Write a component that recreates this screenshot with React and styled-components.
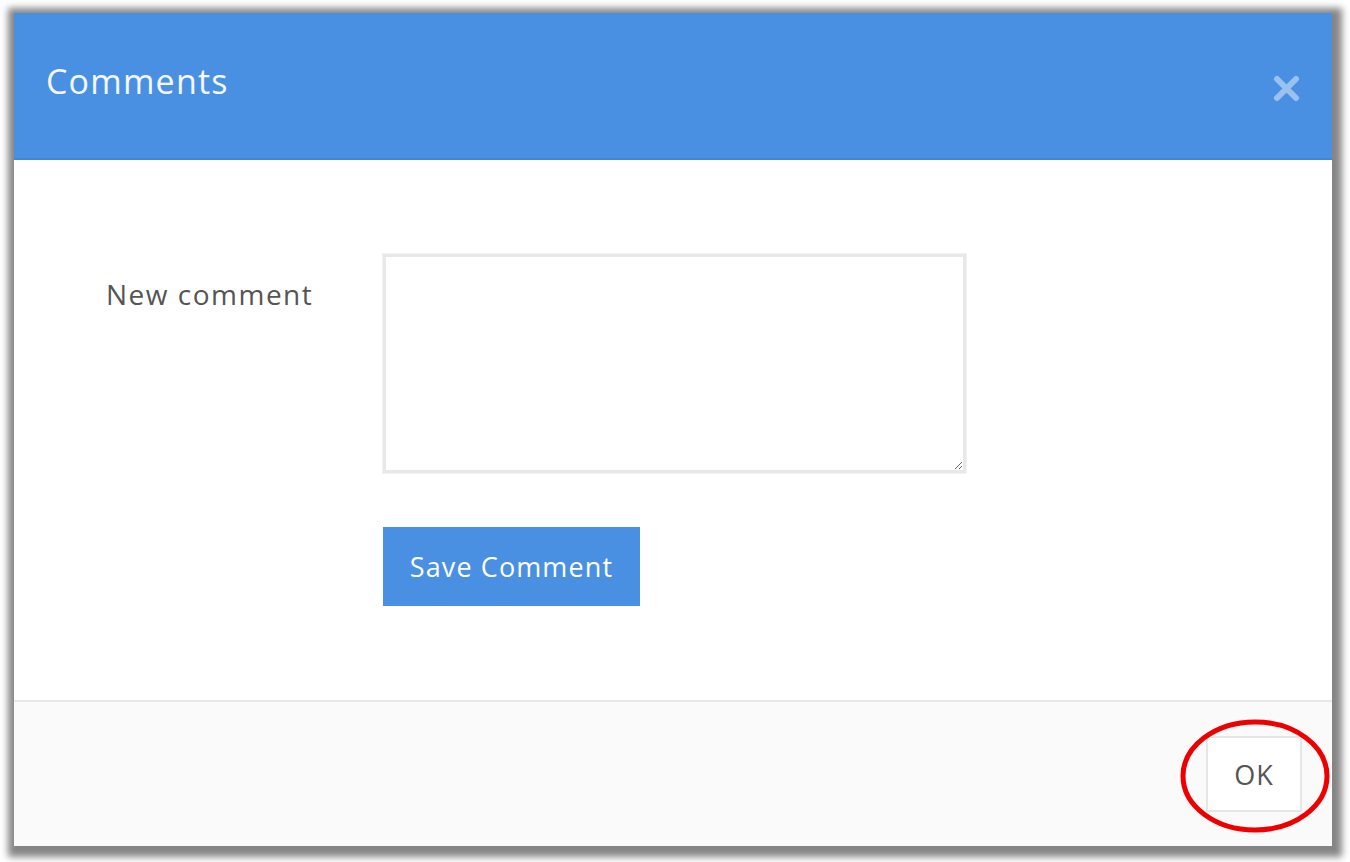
import React from "react";
import styled, { createGlobalStyle } from "styled-components";

const GlobalStyle = createGlobalStyle`
  html, body {
    margin: 0;
    padding: 0;
    background: #ffffff;
  }
  * { box-sizing: border-box; }
`;

const Frame = styled.div`
  width: 1350px;
  height: 862px;
  padding: 13px 18px 16px 14px;
  background: #ffffff;
  overflow: hidden;
`;

const Modal = styled.div`
  position: relative;
  width: 100%;
  height: 100%;
  display: flex;
  flex-direction: column;
  background: #fff;
  box-shadow: 2px 3px 7px 8px rgba(0, 0, 0, 0.48);
  font-family: "Open Sans", "Noto Sans", sans-serif;
`;

const Header = styled.div`
  height: 147px;
  flex: none;
  display: flex;
  align-items: center;
  justify-content: space-between;
  padding: 0 32px 10px 32px;
  background: #4a90e2;
  border-bottom: 2px solid #3f86dd;
`;

const Title = styled.h1`
  margin: 0;
  font-size: 34px;
  font-weight: 400;
  color: #f4f8fe;
  letter-spacing: 1.2px;
`;

const CloseButton = styled.button`
  border: none;
  background: none;
  padding: 0;
  margin-top: 16px;
  width: 28px;
  height: 28px;
  cursor: pointer;
  display: flex;
  align-items: center;
  justify-content: center;
`;

const Body = styled.div`
  flex: 1;
  padding: 94px 0 0 92px;
  display: flex;
  flex-direction: column;
  gap: 54px;
`;

const FormRow = styled.div`
  display: grid;
  grid-template-columns: 277px 583px;
  align-items: start;
`;

const Label = styled.label`
  padding-top: 21px;
  font-size: 28px;
  color: #555;
  letter-spacing: 1.5px;
`;

const TextArea = styled.textarea`
  width: 583px;
  height: 219px;
  border: 3px solid #e8e8e8;
  outline: 1px solid #f2f2f2;
  background: #fff;
  font-family: inherit;
  font-size: 22px;
`;

const Actions = styled.div`
  padding-left: 277px;
`;

const Button = styled.button`
  font-family: "Open Sans", "Noto Sans", sans-serif;
  font-size: 27px;
  letter-spacing: 1.1px;
  cursor: pointer;
  border: ${p => (p.primary ? "1px solid #4a90e2" : "2px solid #e6e6e6")};
  background: ${p => (p.primary ? "#4a90e2" : "#ffffff")};
  color: ${p => (p.primary ? "#ffffff" : "#555")};
  height: ${p => (p.primary ? "79px" : "76px")};
  width: ${p => (p.primary ? "257px" : "96px")};
  padding: 0;
`;

const Footer = styled.div`
  position: relative;
  height: 146px;
  flex: none;
  display: flex;
  align-items: center;
  justify-content: flex-end;
  padding: 0 30px 0 0;
  background: #fafafa;
  border-top: 2px solid #e8e8e8;
`;

const Highlight = styled.svg`
  position: absolute;
  right: 1px;
  top: 16px;
  pointer-events: none;
`;

export default function App() {
  return (
    <>
      <GlobalStyle />
      <Frame>
        <Modal>
          <Header>
            <Title>Comments</Title>
            <CloseButton aria-label="close">
              <svg width="27" height="27" viewBox="0 0 27 27">
                <path
                  d="M4 4 L23 23 M23 4 L4 23"
                  stroke="rgba(255,255,255,0.45)"
                  strokeWidth="6"
                  strokeLinecap="round"
                />
              </svg>
            </CloseButton>
          </Header>
          <Body>
            <FormRow>
              <Label>New comment</Label>
              <TextArea />
            </FormRow>
            <Actions>
              <Button primary>Save Comment</Button>
            </Actions>
          </Body>
          <Footer>
            <Button>OK</Button>
            <Highlight width="152" height="116" viewBox="0 0 152 116">
              <ellipse cx="76" cy="58" rx="72" ry="54" fill="none" stroke="#ee0000" strokeWidth="5" />
            </Highlight>
          </Footer>
        </Modal>
      </Frame>
    </>
  );
}
